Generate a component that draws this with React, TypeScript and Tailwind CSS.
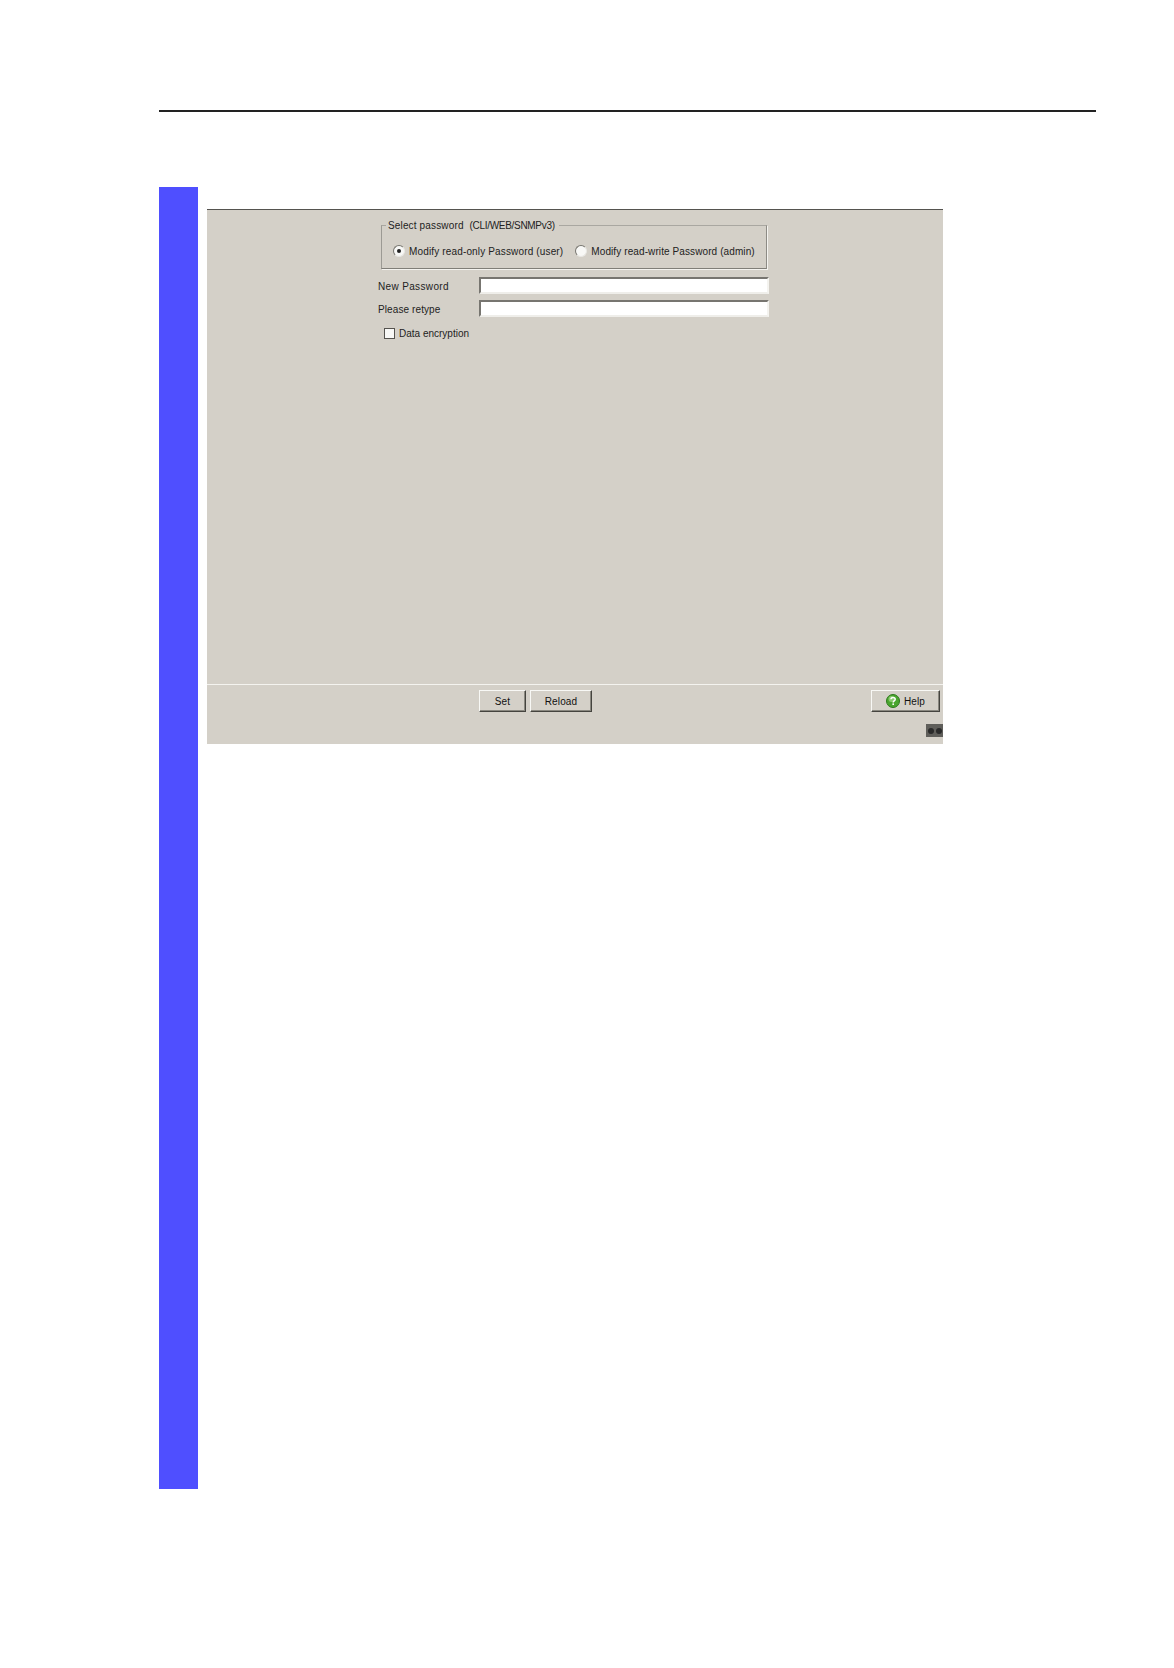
import type { ReactNode } from "react";

export default function App() {
  return (
    <div className="w-[1174px] h-[1668px] bg-white pt-[110px] pl-[159px] font-['Liberation_Sans',Arial,sans-serif] text-[10px] leading-[12px] text-[#222]">
      <div className="w-[937px] h-[2px] bg-[#222]" />
      <div className="flex mt-[75px]">
        <div className="w-[39px] h-[1302px] bg-[#4f4fff]" />
        <div className="ml-[9px] mt-[22px] w-[736px] h-[535px] bg-[#d4d0c8] border-t-[1px] border-[#55534f] flex flex-col">
          <div className="h-[475px] pl-[174px] pt-[15px] border-b border-[#f4f3ef]">
            <div className="relative w-[386px] h-[44px] border border-t-[#a9a7a1] border-l-[#9c9a94] border-r-[#8d8b85] border-b-[#807e78] shadow-[1px_1px_0_#f4f3ef] flex items-center pl-[11px] pt-[9px]">
              <span className="absolute left-[4px] -top-[6px] bg-[#d4d0c8] pl-[2px] pr-[4px] tracking-[0.15px] whitespace-nowrap">
                Select password&nbsp; <span className="tracking-[-0.3px]">(CLI/WEB/SNMPv3)</span>
              </span>
              <span className="mb-[2px] w-[12px] h-[12px] rounded-full bg-[#f8f8f6] border border-t-[#77756f] border-l-[#77756f] border-r-[#e8e7e3] border-b-[#e8e7e3] flex items-center justify-center shrink-0">
                <span className="w-[4px] h-[4px] rounded-full bg-[#222]" />
              </span>
              <span className="ml-[4px] tracking-[0.15px] whitespace-nowrap">Modify read-only Password (user)</span>
              <span className="mb-[2px] ml-[12px] w-[12px] h-[12px] rounded-full bg-[#f8f8f6] border border-t-[#77756f] border-l-[#77756f] border-r-[#e8e7e3] border-b-[#e8e7e3] shrink-0" />
              <span className="ml-[4px] tracking-[0.1px] whitespace-nowrap">Modify read-write Password (admin)</span>
            </div>
            <div className="-ml-[3px] mt-[8px] flex items-center h-[17px]">
              <span className="w-[101px] pt-[2px] tracking-[0.35px]">New Password</span>
              <div className="w-[290px] h-[17px] bg-white border-2 border-t-[#777570] border-l-[#777570] border-r-[#f4f3ef] border-b-[#efeeea]" />
            </div>
            <div className="-ml-[3px] mt-[6px] flex items-center h-[17px]">
              <span className="w-[101px] pt-[2px] tracking-[0.1px]">Please retype</span>
              <div className="w-[290px] h-[17px] bg-white border-2 border-t-[#777570] border-l-[#777570] border-r-[#f4f3ef] border-b-[#efeeea]" />
            </div>
            <div className="ml-[3px] mt-[9px] flex items-center">
              <span className="w-[11px] h-[11px] bg-[#f8f8f6] border border-[#55534f] shrink-0" />
              <span className="ml-[4px] pt-[2px] whitespace-nowrap">Data encryption</span>
            </div>
          </div>
          <div className="flex pt-[5px] pl-[272px] pr-[3px] h-[39px]">
            <Btn w="w-[47px]">Set</Btn>
            <Btn w="w-[62px] ml-[4px]">Reload</Btn>
            <div className="flex-1" />
            <Btn w="w-[69px]">
              <svg width="14" height="14" viewBox="0 0 14 14" className="mr-[4px] -mt-[1px]">
                <circle cx="7" cy="7" r="6.5" fill="#4aa62f" stroke="#2d7a1c" />
                <circle cx="5.5" cy="5" r="3" fill="#a6dc8c" opacity="0.7" />
                <path d="M5 5.2c0-2.4 4.2-2.4 4.2 0 0 1.6-2 1.6-2 3.2" fill="none" stroke="#fff" strokeWidth="1.5" />
                <rect x="6.4" y="9.4" width="1.6" height="1.6" fill="#fff" />
              </svg>
              Help
            </Btn>
          </div>
          <div className="flex justify-end">
            <div className="w-[17px] h-[13px] bg-[#5f5e5a] flex items-center justify-center gap-[2px]">
              <span className="w-[6px] h-[6px] rounded-full bg-[#2a2a2a]" />
              <span className="w-[6px] h-[6px] rounded-full bg-[#2a2a2a]" />
            </div>
          </div>
        </div>
      </div>
    </div>
  );
}

function Btn({ w, children }: { w: string; children: ReactNode }) {
  return (
    <div className={`${w} h-[22px] pt-[1px] bg-[#d4d0c8] border border-t-[#f8f8f5] border-l-[#f8f8f5] border-r-[#45443f] border-b-[#45443f] shadow-[inset_-1px_-1px_0_#8a8880] flex items-center justify-center text-[#111] tracking-[0.15px]`}>
      {children}
    </div>
  );
}
